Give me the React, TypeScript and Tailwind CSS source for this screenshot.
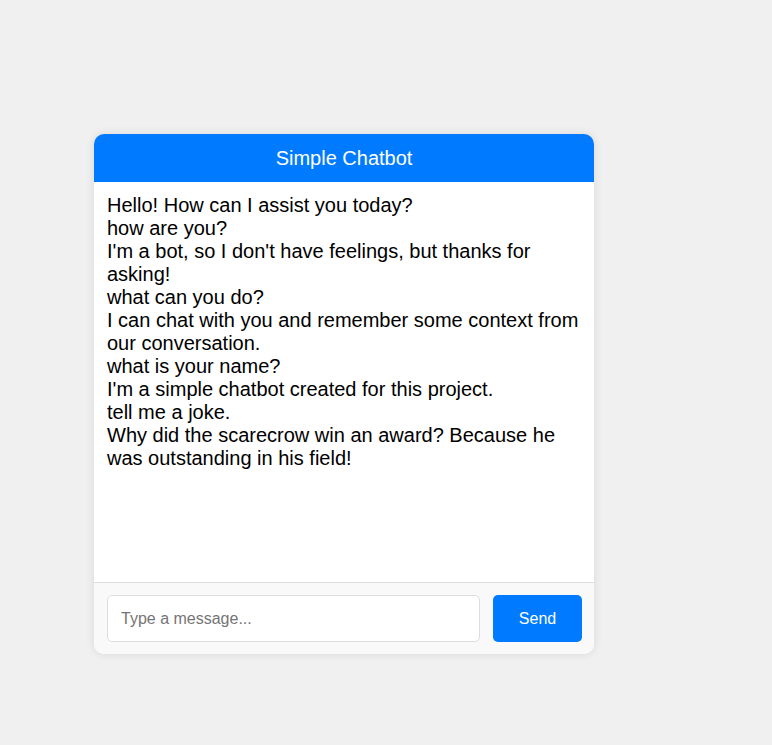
import React from "react";

const messages = [
  "Hello! How can I assist you today?",
  "how are you?",
  "I'm a bot, so I don't have feelings, but thanks for asking!",
  "what can you do?",
  "I can chat with you and remember some context from our conversation.",
  "what is your name?",
  "I'm a simple chatbot created for this project.",
  "tell me a joke.",
  "Why did the scarecrow win an award? Because he was outstanding in his field!",
];

export default function App() {
  return (
    <div
      className="min-h-[745px] w-full bg-[#f0f0f0] pt-[134px] pl-[94px]"
      style={{ fontFamily: '"Liberation Sans", Arial, sans-serif' }}
    >
      <div className="w-[500px] rounded-[10px] overflow-hidden bg-white shadow-[0_0_10px_rgba(0,0,0,0.1)]">
        <div className="h-[48px] bg-[#007bff] text-white text-[20px] flex items-center justify-center pb-[1px]">
          Simple Chatbot
        </div>
        <div className="h-[400px] overflow-y-auto px-[13px] pt-[12px] text-[20px] leading-[23px] text-black">
          {messages.map((m, i) => (
            <div key={i}>{m}</div>
          ))}
        </div>
        <div className="flex gap-[13px] border-t border-[#ddd] bg-[#f9f9f9] pl-[13px] pr-[12px] py-[12px]">
          <input
            className="h-[47px] flex-1 rounded-[5px] border border-[#ddd] bg-white px-[13px] text-[16px] outline-none placeholder:text-[#757575]"
            placeholder="Type a message..."
          />
          <button className="h-[47px] w-[89px] rounded-[5px] bg-[#007bff] text-white text-[16px]">
            Send
          </button>
        </div>
      </div>
    </div>
  );
}
